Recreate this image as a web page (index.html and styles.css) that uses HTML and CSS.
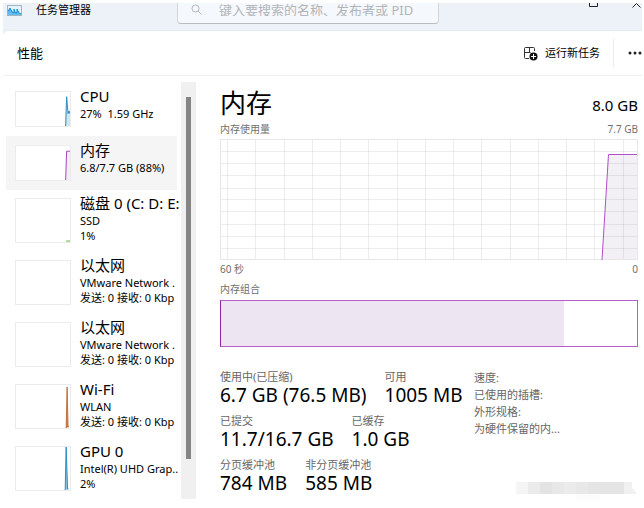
FILE: index.html
```html
<!DOCTYPE html>
<html lang="zh-CN">
<head>
<meta charset="utf-8">
<title>任务管理器</title>
<link rel="stylesheet" href="styles.css">
</head>
<body>
<div class="window">
  <header class="titlebar">
    <svg class="app-icon" width="15" height="11" viewBox="0 0 15 11"><rect x=".5" y=".5" width="14" height="10" fill="#e3f3fc" stroke="#a3b3c0"/><path d="M1 10V6l2-3 2 3 2 2V4l1 3h2V4l2 4 2 1v1z" fill="#63bdf0"/><path d="M1 6.500L3 3l2 4 2 1V4l1.500 4H10V4l2 4 2 1" fill="none" stroke="#168bd2"/></svg>
    <h1 class="app-name">任务管理器</h1>
    <label class="search">
      <svg width="11" height="11" viewBox="0 0 11 11" fill="none" stroke="#b4b8bc"><circle cx="4.500" cy="4.500" r="3.500"/><path d="M7 7l3.500 3.500"/></svg>
      <input type="text" aria-label="搜索" placeholder="键入要搜索的名称、发布者或 PID">
    </label>
    <div class="controls">
      <button aria-label="最大化"><svg width="10" height="5" viewBox="0 0 10 5" fill="none" stroke="#222"><path d="M.5 0v3.500h8V0"/></svg></button>
      <button aria-label="关闭"><svg width="10" height="5" viewBox="0 0 10 5" fill="none" stroke="#222"><path d="M.5 4.500l4-4 4 4"/></svg></button>
    </div>
  </header>
  <div class="card">
    <div class="toolbar">
      <h2 class="page">性能</h2>
      <button class="run"><svg width="15" height="15" viewBox="0 0 15 15" fill="none" stroke="#333"><path d="M6 12.500H2.500a1 1 0 0 1-1-1V2.500a1 1 0 0 1 1-1h8a1 1 0 0 1 1 1V5M6.500 1.500v5M1.500 6.500h6"/><circle cx="10.500" cy="10.500" r="4" fill="#111" stroke="none"/><path d="M10.500 8v5M8 10.500h5" stroke="#fff"/></svg>运行新任务</button>
      <button class="more" aria-label="更多"><svg width="15" height="4" viewBox="0 0 15 4" fill="#222"><circle cx="3" cy="2" r="1.500"/><circle cx="8" cy="2" r="1.500"/><circle cx="13" cy="2" r="1.500"/></svg></button>
    </div>
    <div class="content">
      <nav class="sidebar">
        <ul class="devices">
          <li class="device"><svg class="mini" viewBox="0 0 56 36" preserveAspectRatio="none"><path d="M51 36l1-31 2 20 1-4 1 2v13z" fill="#cfe5f2"/><path d="M51.500 36l1-31 1.500 18 1-3 1 3" fill="none" stroke="#2589c4"/></svg><div class="info"><b>CPU</b><span>27%&nbsp; 1.59 GHz</span></div></li>
          <li class="device selected"><svg class="mini" viewBox="0 0 56 36" preserveAspectRatio="none"><path d="M51 36l1-31h4v31z" fill="#f3eef6"/><path d="M51.500 36l1-30.500H56" fill="none" stroke="#a23fc0"/></svg><div class="info"><b>内存</b><span>6.8/7.7 GB (88%)</span></div></li>
          <li class="device tall"><svg class="mini" viewBox="0 0 56 44" preserveAspectRatio="none"><path d="M52 43h4" fill="none" stroke="#5cb82a"/></svg><div class="info"><b>磁盘 0 (C: D: E:</b><span>SSD</span><span>1%</span></div></li>
          <li class="device tall"><svg class="mini" viewBox="0 0 56 44"></svg><div class="info"><b>以太网</b><span>VMware Network .</span><span>发送: 0 接收: 0 Kbp</span></div></li>
          <li class="device tall"><svg class="mini" viewBox="0 0 56 44"></svg><div class="info"><b>以太网</b><span>VMware Network .</span><span>发送: 0 接收: 0 Kbp</span></div></li>
          <li class="device tall"><svg class="mini" viewBox="0 0 56 44" preserveAspectRatio="none"><path d="M52 44l1-42 1 40 1 1" fill="#c87941" stroke="#c4713a"/></svg><div class="info"><b>Wi-Fi</b><span>WLAN</span><span>发送: 0 接收: 0 Kbp</span></div></li>
          <li class="device tall"><svg class="mini" viewBox="0 0 56 44" preserveAspectRatio="none"><path d="M51 44l1-44 1.500 43h1" fill="#8fc3e2" stroke="#2589c4"/></svg><div class="info"><b>GPU 0</b><span>Intel(R) UHD Grap..</span><span>2%</span></div></li>
        </ul>
        <div class="track"><div class="thumb"></div></div>
      </nav>
      <main class="detail">
        <div class="heading"><h2>内存</h2><span>8.0 GB</span></div>
        <div class="caption usage"><span>内存使用量</span><span>7.7 GB</span></div>
        <svg class="chart" viewBox="0 0 418 121" preserveAspectRatio="none">
          <path d="M382 121L388 16H418V121z" fill="#f3f0f5"/>
          <path d="M7.500 0V121M35.500 0V121M64.500 0V121M92.500 0V121M120.500 0V121M148.500 0V121M177.500 0V121M205.500 0V121M233.500 0V121M261.500 0V121M290.500 0V121M318.500 0V121M346.500 0V121M374.500 0V121M403.500 0V121M0 12.500H418M0 24.500H418M0 36.500H418M0 49.500H418M0 60.500H418M0 72.500H418M0 85.500H418M0 97.500H418M0 109.500H418" stroke="#000" stroke-opacity=".07"/>
          <path d="M.5 .5H417.500V120.500H.5z" fill="none" stroke="#e6e6e6"/>
          <path d="M382 121L388.500 15.500H417" fill="none" stroke="#b14fcd"/>
        </svg>
        <div class="caption axis"><span>60 秒</span><span>0</span></div>
        <div class="caption"><span>内存组合</span></div>
        <div class="composition"><div class="used"></div></div>
        <div class="stats">
          <div class="figures">
            <dl><div><dt>使用中(已压缩)</dt><dd>6.7 GB (76.5 MB)</dd></div><div><dt>可用</dt><dd>1005 MB</dd></div></dl>
            <dl><div><dt>已提交</dt><dd>11.7/16.7 GB</dd></div><div><dt>已缓存</dt><dd>1.0 GB</dd></div></dl>
            <dl><div><dt>分页缓冲池</dt><dd>784 MB</dd></div><div><dt>非分页缓冲池</dt><dd>585 MB</dd></div></dl>
          </div>
          <ul class="specs"><li>速度:</li><li>已使用的插槽:</li><li>外形规格:</li><li>为硬件保留的内...</li></ul>
        </div>
        <svg class="mosaic" width="120" height="19" viewBox="0 0 120 19"><path d="M0 0h12v12H0z" fill="#f5f5f5"/><path d="M12 0h12v12H12zM48 0h12v12H48z" fill="#ebebeb"/><path d="M24 0h12v12H24z" fill="#e3e3e3"/><path d="M36 0h12v12H36zM60 0h12v12H60z" fill="#e8e8e8"/><path d="M72 0h36v12H72z" fill="#e5e5e5"/><path d="M108 0h8v6l4 4v2h-12z" fill="#f1f1f1"/><path d="M60 12h24v6H60z" fill="#fcfcfc"/></svg>
      </main>
    </div>
  </div>
</div>
</body>
</html>
```
FILE: styles.css
```css
* { box-sizing: border-box; }
body {
  margin: 0;
  background: #fff;
  color: #000;
  font-family: "Noto Sans", "Noto Sans CJK SC", sans-serif;
  font-size: 11px;
}
h1, h2, ul, dl, dd { margin: 0; padding: 0; font-weight: 400; }
ul { list-style: none; }
button { padding: 0; border: 0; background: none; color: inherit; font: inherit; }
svg { display: block; flex: none; }

.window { margin: 3px 2px 0 3px; background: #edf2f9; }
.titlebar { display: flex; align-items: flex-start; height: 27px; padding-left: 4px; }
.app-icon { margin-top: 2px; }
.app-name { width: 155px; padding-left: 14px; font-size: 11px; line-height: 13px; }
.search {
  display: flex;
  width: 262px;
  height: 21px;
  padding-left: 13px;
  border: 1px solid #d3d7dc;
  border-top: 0;
  border-bottom-color: #b9bcc0;
  border-radius: 0 0 4px 4px;
  background: #f5f8fc;
}
.search svg { margin-top: 1px; }
.search input {
  flex: 1;
  min-width: 0;
  height: 13px;
  margin-left: 17px;
  padding: 0;
  border: 0;
  outline: 0;
  background: none;
  font: inherit;
  font-size: 13px;
}
.search input::placeholder { color: #b2b5b9; opacity: 1; }
.controls { display: flex; gap: 33px; margin-left: auto; }

.card { border-top: 1px solid #e6ebf0; border-top-left-radius: 6px; background: #fff; }
.toolbar {
  display: flex;
  align-items: center;
  height: 45px;
  padding-left: 14px;
  border-bottom: 1px solid #f0f0f0;
}
.page { flex: 1; font-size: 13px; line-height: 18px; }
.run {
  display: flex;
  align-items: center;
  gap: 7px;
  height: 28px;
  padding-right: 13px;
  border-right: 1px solid #ececec;
  line-height: 16px;
}
.more { padding-left: 13px; }

.content { display: flex; gap: 24px; padding-top: 6px; }
.sidebar { display: flex; flex: none; width: 193px; }
.devices { flex: 1; min-width: 0; padding-left: 3px; }
.device { display: flex; gap: 9px; height: 54px; padding: 9px 0 9px 9px; }
.device.tall { height: 62px; padding-top: 8px; padding-bottom: 9px; }
.selected { margin-right: 4px; background: #f5f5f5; }
.mini { width: 56px; height: 100%; border: 1px solid #ebebeb; background: #fff; }
.info { flex: 1; min-width: 0; margin-top: -4px; white-space: nowrap; }
.info b { display: block; font-size: 15px; font-weight: 400; line-height: 19px; }
.info span { display: block; line-height: 15px; }
.track { width: 15px; height: 417px; padding: 15px 5px 0; background: #f0f0f0; }
.thumb { height: 362px; background: #858585; }

.detail { position: relative; flex: 1; min-width: 0; padding: 4px 4px 0 0; }
.heading { display: flex; justify-content: space-between; align-items: center; height: 34px; }
.heading h2 { font-size: 26px; line-height: 32px; }
.heading span { padding-top: 4px; font-size: 15px; }
.caption { display: flex; justify-content: space-between; color: #707070; font-size: 10px; line-height: 18px; }
.chart { width: 100%; height: 121px; margin-top: 1px; }
.axis { margin-bottom: 2px; }
.composition { height: 47px; margin-top: 2px; border: 1px solid #b45fcb; border-left-color: #8e24aa; }
.used { width: 82.5%; height: 100%; background: #ede5f2; }
.stats { display: flex; justify-content: space-between; padding-top: 22px; }
.figures dl { display: flex; gap: 18px; margin-bottom: 7px; white-space: nowrap; }
dt { color: #666; line-height: 15px; }
dd { font-size: 19px; line-height: 22px; }
.specs { width: 164px; color: #666; line-height: 17px; }
.mosaic { position: absolute; right: 6px; bottom: 0; }
```
